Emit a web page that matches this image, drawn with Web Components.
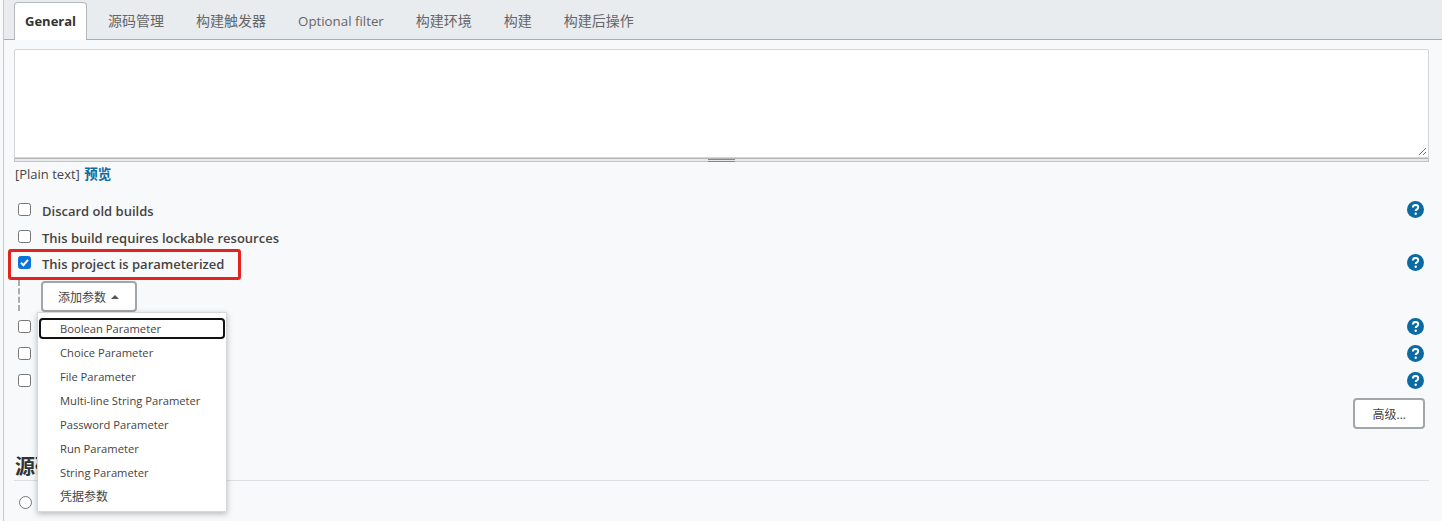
<!DOCTYPE html>
<html lang="zh">
<head>
<meta charset="utf-8">
<title>General</title>
<style>
  html, body { margin: 0; height: 521px; overflow: hidden; background: #f8f9fa; }
  body { font: 13px "Open Sans", "Noto Sans CJK SC", sans-serif; color: #333; }
</style>
</head>
<body>
<template id="config-tpl">
  <style>
    :host { display: block; position: relative; height: 521px; margin-left: 3px; border-left: 1px solid #c6cacd; box-sizing: border-box; overflow: hidden; }
    .body { padding: 9px 13px 0 10px; display: flex; flex-direction: column; }
    .note { font-size: 13px; line-height: 18px; margin-top: 3px; padding-left: 1px; color: #444; }
    .note b { color: #0b6aa2; font-weight: 700; font-size: 13.5px; margin-left: 1px; }
    .rows { display: flex; flex-direction: column; margin-top: 13px; }
    .adder { display: flex; margin-left: 3px; height: 37px; }
    .dash { width: 0; height: 31px; margin: 4px 0 0 1px; border-left: 2px dashed #aaa; }
    .adder jk-button { margin: 5px 0 0 21px; padding-right: 16px; }
    .advanced { display: flex; justify-content: flex-end; margin: 4px 4px 0 0; }
    .advanced jk-button { padding: 0 17px 0 18px; }
    h2 { margin: 24px 0 0; padding-left: 1px; font-size: 20px; line-height: 28px; font-weight: 700; color: #333; border-bottom: 1px solid #dcdfe2; height: 27px; }
    .radio { width: 11px; height: 11px; border: 1px solid #767676; border-radius: 50%; background: #fff; margin: 15px 0 0 5px; }
    .mark { position: absolute; left: 4px; top: 249px; width: 233px; height: 31px; border: 3px solid #e3231c; border-radius: 3px; box-sizing: border-box; pointer-events: none; }
    jk-menu { position: absolute; left: 33px; top: 312px; }
  </style>
  <jk-tabs>
    <jk-tab active>General</jk-tab><jk-tab first>源码管理</jk-tab><jk-tab>构建触发器</jk-tab><jk-tab latin>Optional filter</jk-tab><jk-tab>构建环境</jk-tab><jk-tab>构建</jk-tab><jk-tab>构建后操作</jk-tab>
  </jk-tabs>
  <div class="body">
    <jk-editor></jk-editor>
    <div class="note">[Plain text] <b>预览</b></div>
    <div class="rows">
      <jk-row help>Discard old builds</jk-row>
      <jk-row>This build requires lockable resources</jk-row>
      <jk-row checked help>This project is parameterized</jk-row>
      <div class="adder"><div class="dash"></div><jk-button caret>添加参数</jk-button></div>
      <jk-row help></jk-row>
      <jk-row help></jk-row>
      <jk-row help></jk-row>
    </div>
    <div class="advanced"><jk-button>高级...</jk-button></div>
    <h2>源码管理</h2>
    <div class="radio"></div>
  </div>
  <div class="mark"></div>
  <jk-menu>
    <jk-item focus>Boolean Parameter</jk-item>
    <jk-item>Choice Parameter</jk-item>
    <jk-item>File Parameter</jk-item>
    <jk-item>Multi-line String Parameter</jk-item>
    <jk-item>Password Parameter</jk-item>
    <jk-item>Run Parameter</jk-item>
    <jk-item>String Parameter</jk-item>
    <jk-item cjk>凭据参数</jk-item>
  </jk-menu>
</template>
<jk-config></jk-config>
<script>
  const def = (name, html) => {
    customElements.define(name, class extends HTMLElement {
      constructor() {
        super();
        this.attachShadow({ mode: 'open' }).innerHTML = html;
      }
    });
  };

  customElements.define('jk-config', class extends HTMLElement {
    constructor() {
      super();
      const tpl = document.getElementById('config-tpl');
      this.attachShadow({ mode: 'open' }).appendChild(tpl.content.cloneNode(true));
    }
  });

  def('jk-tabs', `<style>
    :host { display: flex; height: 40px; box-sizing: border-box; padding: 2px 0 0 10px; background: #e9ecef; border-bottom: 1px solid #a9adb1; }
  </style><slot></slot>`);

  def('jk-tab', `<style>
    :host { display: block; height: 38px; box-sizing: border-box; padding: 0 15px; line-height: 36px; font-size: 14px; color: #666; white-space: nowrap; border: 1px solid transparent; border-bottom: 0; }
    :host([first]) { margin-left: 5px; }
    :host([latin]) { font-size: 13.3px; }
    :host([active]) { padding: 0 10px; font-size: 13px; background: #fff; color: #333; font-weight: 700; border-color: #b4b8bc; border-radius: 4px 4px 0 0; }
  </style><slot></slot>`);

  def('jk-editor', `<style>
    :host { display: block; }
    .area { height: 107px; background: #fff; border: 1px solid #d3d6d9; border-radius: 2px 2px 0 0; position: relative; }
    .area svg { position: absolute; right: 1px; bottom: 1px; }
    .grip { height: 2px; background: #e7e9eb; border: 1px solid #c0c3c6; border-top-color: #b4b7ba; display: flex; justify-content: center; align-items: center; }
    .grip i { width: 27px; height: 1px; border-top: 1px solid #888; border-bottom: 1px solid #888; flex: none; }
  </style>
  <div class="area"><svg width="9" height="9" viewBox="0 0 9 9"><path d="M1 8 8 1M5 8 8 5" stroke="#777" fill="none"/></svg></div>
  <div class="grip"><i></i></div>`);

  def('jk-row', `<style>
    :host { display: flex; align-items: center; height: 27px; padding-left: 4px; font-weight: 600; font-size: 13px; color: #444; }
    :host([checked]) { margin-top: -1px; }
    .box { width: 11px; height: 11px; border: 1px solid #767676; border-radius: 2.5px; background: #fff; margin-right: 11px; flex: none; display: flex; }
    :host([checked]) .box { background: #0a74da; border-color: #0a74da; }
    .box svg { display: none; }
    :host([checked]) .box svg { display: block; }
    .text { flex: 1; position: relative; top: 1.5px; }
    .help { display: none; margin-right: 5px; }
    :host([help]) .help { display: block; }
  </style>
  <span class="box"><svg width="11" height="11" viewBox="0 0 11 11"><path d="M2 5.8 4.4 8.2 9 2.8" stroke="#fff" stroke-width="2" fill="none"/></svg></span>
  <span class="text"><slot></slot></span>
  <svg class="help" width="17" height="17" viewBox="0 0 17 17"><circle cx="8.5" cy="8.5" r="8.5" fill="#0b6aa2"/><path d="M5.9 6.5C5.9 5 7 4 8.6 4c1.5 0 2.6.9 2.6 2.2 0 1-.5 1.6-1.4 2.2-.8.5-1.1.9-1.1 1.7" stroke="#fff" stroke-width="1.9" fill="none"/><circle cx="8.7" cy="12.7" r="1.2" fill="#fff"/></svg>`);

  def('jk-button', `<style>
    :host { display: inline-flex; align-items: center; justify-content: center; gap: 5px; height: 31px; box-sizing: border-box; padding: 0 15px; background: #fff; border: 2px solid #a3a6a9; border-radius: 4px; font-size: 12px; color: #444; white-space: nowrap; }
    .caret { display: none; width: 0; height: 0; border: 4px solid transparent; border-top: 0; border-bottom: 4px solid #555; }
    :host([caret]) .caret { display: block; }
  </style><slot></slot><span class="caret"></span>`);

  def('jk-menu', `<style>
    :host { display: block; width: 190px; box-sizing: border-box; padding: 5px 1px 3px; background: #fff; border: 1px solid #d8d8d8; box-shadow: 0 2px 6px rgba(0,0,0,.25); }
  </style><slot></slot>`);

  def('jk-item', `<style>
    :host { display: block; height: 24px; box-sizing: border-box; padding-left: 21px; line-height: 25px; font-size: 11.2px; color: #444; white-space: nowrap; }
    :host([cjk]) { font-size: 12px; }
    :host([focus]) { height: 21px; margin-bottom: 1px; line-height: 18px; padding-left: 19px; border: 2px solid #111; border-radius: 4px; }
  </style><slot></slot>`);
</script>
</body>
</html>
